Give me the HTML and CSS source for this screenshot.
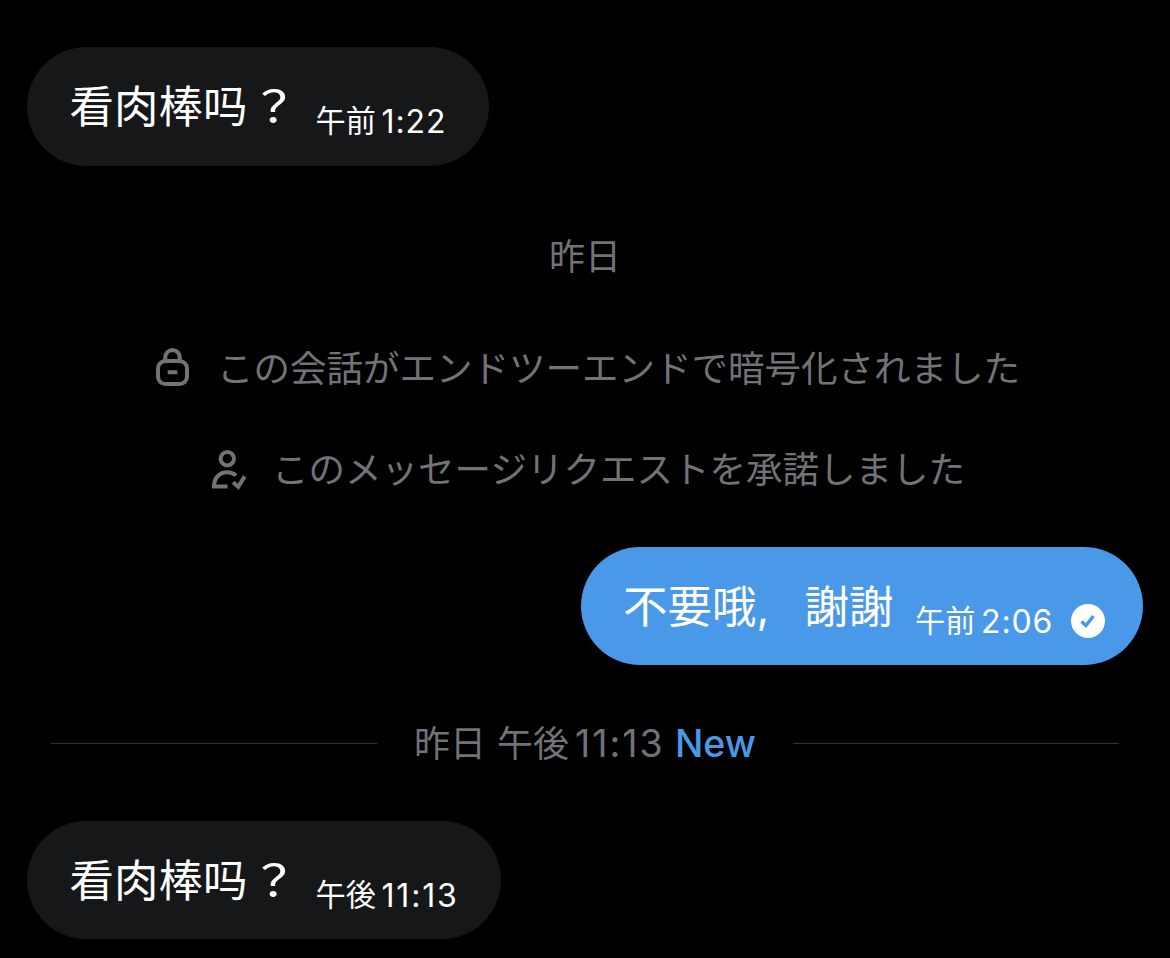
FILE: index.html
```html
<!DOCTYPE html>
<html lang="ja">
<head>
<meta charset="utf-8">
<title>Messages</title>
<link rel="stylesheet" href="styles.css">
</head>
<body>
<main class="chat">
  <div class="bubble received">
    <span class="text" lang="zh-CN">看肉棒吗<span class="question">？</span></span>
    <span class="time"><span class="period">午前</span><span class="clock">1:22</span></span>
  </div>

  <div class="notice day">昨日</div>

  <div class="notice encrypted">
    <svg class="icon" viewBox="0 0 40 44" fill="none" stroke="currentColor" stroke-width="4">
      <rect x="5" y="15" width="29" height="23" rx="7.500"/>
      <path d="M12.300 15v-3.800a7.200 7.200 0 0 1 14.400 0V15M14.700 26.200h9.600"/>
    </svg>
    <span>この会話がエンドツーエンドで暗号化されました</span>
  </div>

  <div class="notice accepted">
    <svg class="icon" viewBox="0 0 40 44" fill="none" stroke="currentColor" stroke-width="4">
      <circle cx="19.300" cy="11.700" r="6.700"/>
      <path d="M19.600 39.500H6C6 30.500 11.800 25.300 19.300 25.300c3.500 0 6.400 1.100 8.700 3.100M25.100 35.200l5.200 4.700 6.300-10.500"/>
    </svg>
    <span>このメッセージリクエストを承諾しました</span>
  </div>

  <div class="bubble sent">
    <span class="text" lang="ja">不要哦<span class="comma">,</span>謝謝</span>
    <span class="time"><span class="period">午前</span><span class="clock">2:06</span></span>
    <svg class="receipt" viewBox="0 0 34 34">
      <circle cx="17" cy="17" r="17" fill="#fff"/>
      <path d="M10.500 17.500l4.400 4 7.600-9.500" fill="none" stroke="#4a99e9" stroke-width="3.400"/>
    </svg>
  </div>

  <div class="divider">
    <span class="line"></span>
    <span class="label"><span class="label-day">昨日</span><span class="label-period">午後</span><span class="label-clock">11:13</span><span class="new">New</span></span>
    <span class="line"></span>
  </div>

  <div class="bubble received last">
    <span class="text" lang="zh-CN">看肉棒吗<span class="question">？</span></span>
    <span class="time"><span class="period">午後</span><span class="clock">11:13</span></span>
  </div>
</main>
</body>
</html>
```

FILE: styles.css
```css
* { box-sizing: border-box; }

body {
  margin: 0;
  background: #000;
  color: #fff;
  font-family: Inter, "Noto Sans CJK JP", sans-serif;
}

.chat {
  display: flex;
  flex-direction: column;
  height: 958px;
  padding: 47px 27px 0;
  overflow: hidden;
}

.bubble {
  display: flex;
  flex: none;
  height: 118.500px;
  padding: 0 42.500px;
  border-radius: 60px;
  white-space: nowrap;
}

.received {
  align-self: flex-start;
  width: 462px;
  background: #161719;
}

.last { width: 474px; }

.last .clock { letter-spacing: 1.800px; }

.sent {
  align-self: flex-end;
  width: 562px;
  margin-top: 49px;
  padding: 0 37.500px 0 42px;
  background: #4a99e9;
}

.text {
  flex: none;
  font: 44.500px/114px "Noto Sans CJK JP", sans-serif;
}

.received .text {
  width: 246px;
  font-family: "Noto Sans CJK SC", sans-serif;
}

.sent .text { width: 292px; }

.question {
  display: inline-block;
  margin-left: 17px;
  transform: scaleX(1.2);
}

.comma {
  display: inline-block;
  width: 48px;
  font-family: Inter, sans-serif;
}

.time {
  display: flex;
  flex: none;
  height: 148px;
  line-height: 150px;
}

.period {
  width: 66px;
  font: 30.200px/144px "Noto Sans CJK JP", sans-serif;
}

.clock {
  font-size: 32px;
  letter-spacing: 0.900px;
}

.receipt {
  flex: none;
  width: 34px;
  height: 34px;
  margin: 57px 0 0 17.500px;
}

.notice {
  display: flex;
  justify-content: center;
  align-items: center;
  flex: none;
  height: 60px;
  color: #727277;
  font: 36.500px/60px "Noto Sans CJK JP", sans-serif;
  white-space: nowrap;
}

.day {
  margin-top: 58px;
  font-size: 36px;
}

.encrypted { margin-top: 53px; }
.accepted { margin-top: 41px; }

.icon {
  width: 40px;
  height: 44px;
  margin: 3px 24px 0 3px;
}

.divider {
  display: grid;
  grid-template-columns: 326px 1fr 326px;
  align-items: center;
  flex: none;
  height: 60px;
  margin: 48px 24px 47.500px;
  color: #727277;
}

.line {
  height: 1px;
  margin-bottom: 2px;
  background: #2f3336;
}

.label {
  display: flex;
  padding-left: 37px;
  font-size: 37.500px;
  line-height: 62px;
  white-space: nowrap;
}

.label-day,
.label-period {
  width: 83px;
  font: 36px/56px "Noto Sans CJK JP", sans-serif;
}

.label-period { width: 78px; }

.label-clock {
  width: 100px;
  letter-spacing: 2px;
}

.new {
  color: #4a99e9;
  font-weight: 500;
}
```
